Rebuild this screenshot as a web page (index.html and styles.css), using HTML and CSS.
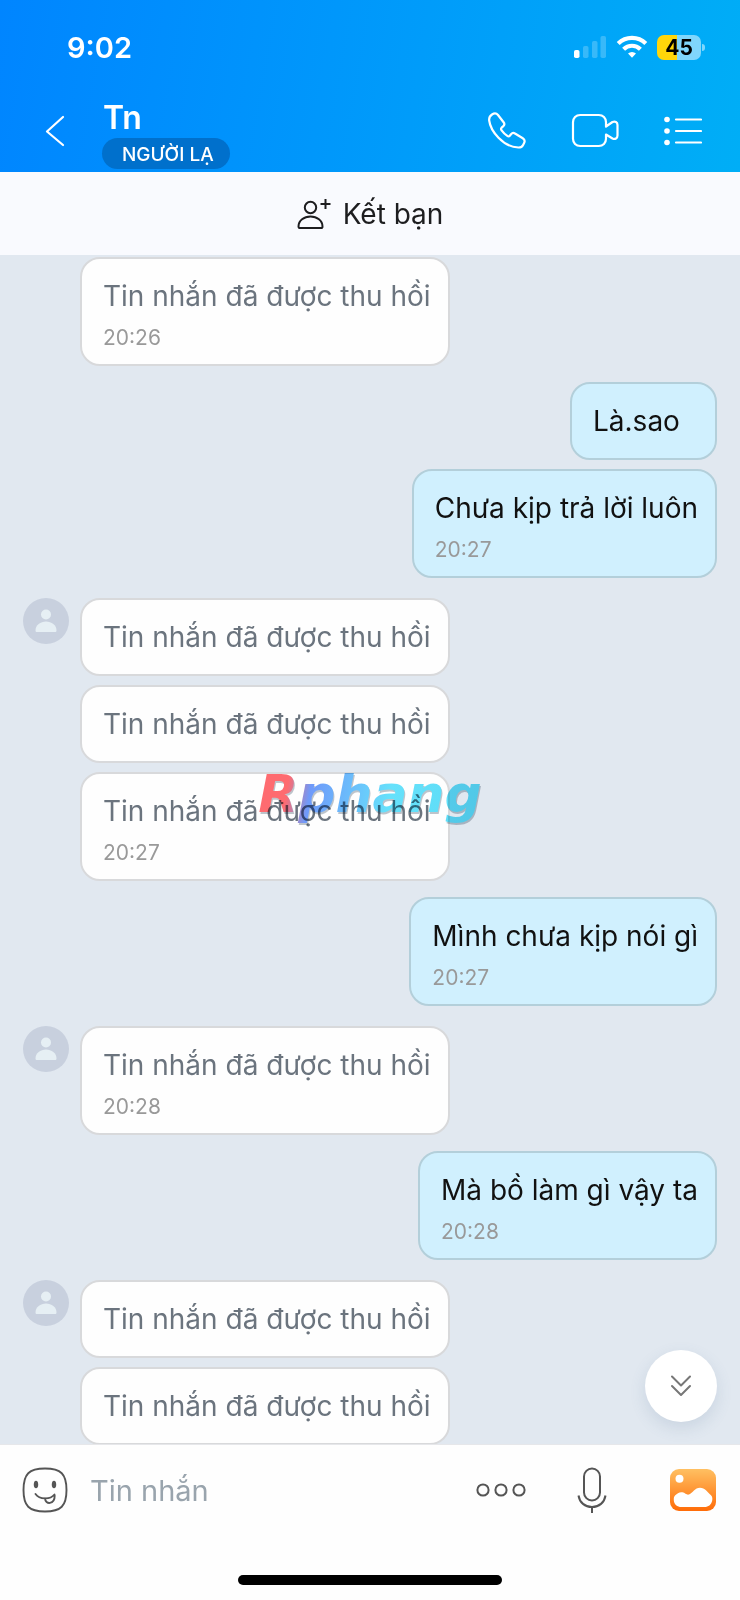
FILE: index.html
```html
<!DOCTYPE html>
<html lang="vi">
<head>
<meta charset="utf-8">
<meta name="viewport" content="width=device-width, initial-scale=1">
<title>Tn</title>
<link rel="stylesheet" href="styles.css">
</head>
<body>
<svg class="defs" aria-hidden="true">
  <symbol id="person" viewBox="0 0 46 46">
    <circle cx="23" cy="16.500" r="5"/>
    <path d="M12.500 32.500c0-5.500 5-9 10.500-9s10.500 3.500 10.500 9c0 1-.6 1.500-1.500 1.500H14c-.9 0-1.500-.5-1.500-1.500z"/>
  </symbol>
</svg>
<div class="app">
  <header class="header">
    <div class="status">
      <span class="clock">9:02</span>
      <div class="status-icons">
        <svg width="34" height="24" viewBox="0 0 34 24" fill="#fff" aria-hidden="true">
          <rect x="1" y="15" width="5.500" height="8" rx="1.800"/>
          <g opacity=".22"><rect x="10" y="11" width="5.500" height="12" rx="1.800"/><rect x="19" y="6" width="5.500" height="17" rx="1.800"/><rect x="27.500" y="1" width="5.500" height="22" rx="1.800"/></g>
        </svg>
        <svg width="32" height="24" viewBox="0 0 32 24" fill="none" stroke="#fff" stroke-width="4.200" aria-hidden="true">
          <path d="M2.200 8.500a19.800 19.800 0 0 1 27.600 0"/>
          <path d="M7.600 14.200a12 12 0 0 1 16.800 0"/>
          <path d="M16 22.800l-4-4.200a5.800 5.800 0 0 1 8 0z" fill="#fff" stroke="none"/>
        </svg>
        <div class="battery"><span class="battery-level">45</span></div>
      </div>
    </div>
    <div class="nav">
      <button class="icon-button back" aria-label="Quay lại">
        <svg width="20" height="32" viewBox="0 0 20 32" fill="none" stroke="#fff" stroke-width="2.200" stroke-linecap="round" stroke-linejoin="round"><path d="M18 2L2 16.500 18 30"/></svg>
      </button>
      <div class="contact">
        <h1 class="name">Tn</h1>
        <span class="tag">NGƯỜI LẠ</span>
      </div>
      <div class="actions">
        <button class="icon-button" aria-label="Gọi thoại">
          <svg width="38" height="38" viewBox="0 0 38 38" fill="none" stroke="#fff" stroke-width="2.200" stroke-linejoin="round"><path d="M4 2.500C6 1.200 8.500 1.200 10 3l5.600 7.200c1.200 1.600.9 3-.5 4.200l-1.500 1.300c-.8.800-.7 1.700 0 2.600 1.700 2.300 3.500 4.100 5.700 5.600.9.600 1.800.6 2.500-.2l1.200-1.500c1.200-1.400 2.500-1.700 4-.7l7.800 4.700c1.900 1.200 2.200 3 1.300 4.800l-1 1.900c-.9 1.700-2.600 2.700-4.700 2.600C15 35 2.500 19 1.200 8.500.9 6 2 3.800 4 2.500z"/></svg>
        </button>
        <button class="icon-button" aria-label="Gọi video">
          <svg width="48" height="36" viewBox="0 0 48 36" fill="none" stroke="#fff" stroke-width="2.200" stroke-linejoin="round"><path d="M35 13.500V9.200C35 5 32 2 27.800 2H9.200C5 2 2 5 2 9.200v16.600C2 30 5 33 9.200 33h18.600c4.200 0 7.200-3 7.200-7.200V21.500l6.500 4c2.600 1.200 5-.1 5-3V12c0-2.900-2.400-4.200-5-3z"/></svg>
        </button>
        <button class="icon-button" aria-label="Tùy chọn">
          <svg width="38" height="30" viewBox="0 0 38 30" fill="#fff"><circle cx="3" cy="3.500" r="2.800"/><circle cx="3" cy="15" r="2.800"/><circle cx="3" cy="26.500" r="2.800"/><path d="M12 3.500h25M12 15h25M12 26.500h25" stroke="#fff" stroke-width="2.200" stroke-linecap="round"/></svg>
        </button>
      </div>
    </div>
  </header>

  <button class="add-friend">
    <svg width="34" height="32" viewBox="0 0 34 32" fill="none" stroke="#1d1d1f" stroke-width="2" stroke-linejoin="round" aria-hidden="true"><circle cx="13.500" cy="9.500" r="5.700"/><path d="M1.500 28.500C1.500 22.500 7 18.500 13.500 18.500s12 4 12 10c0 1-.6 1.600-1.600 1.600H3.100c-1 0-1.600-.6-1.600-1.600zM28.500 1v10M23.500 6h10"/></svg>
    <span>Kết bạn</span>
  </button>

  <main class="chat">
    <div class="messages">
      <section class="group">
        <div class="stack"><div class="bubble muted">Tin nhắn đã được thu hồi<time>20:26</time></div></div>
      </section>
      <section class="group mine">
        <div class="stack">
          <div class="bubble">Là.sao</div>
          <div class="bubble">Chưa kịp trả lời luôn<time>20:27</time></div>
        </div>
      </section>
      <section class="group">
        <svg class="avatar" viewBox="0 0 46 46" aria-hidden="true"><use href="#person"/></svg>
        <div class="stack">
          <div class="bubble muted">Tin nhắn đã được thu hồi</div>
          <div class="bubble muted">Tin nhắn đã được thu hồi</div>
          <div class="bubble muted">Tin nhắn đã được thu hồi<time>20:27</time></div>
        </div>
      </section>
      <section class="group mine">
        <div class="stack"><div class="bubble">Mình chưa kịp nói gì<time>20:27</time></div></div>
      </section>
      <section class="group">
        <svg class="avatar" viewBox="0 0 46 46" aria-hidden="true"><use href="#person"/></svg>
        <div class="stack"><div class="bubble muted">Tin nhắn đã được thu hồi<time>20:28</time></div></div>
      </section>
      <section class="group mine">
        <div class="stack"><div class="bubble">Mà bồ làm gì vậy ta<time>20:28</time></div></div>
      </section>
      <section class="group">
        <svg class="avatar" viewBox="0 0 46 46" aria-hidden="true"><use href="#person"/></svg>
        <div class="stack">
          <div class="bubble muted">Tin nhắn đã được thu hồi</div>
          <div class="bubble muted">Tin nhắn đã được thu hồi</div>
        </div>
      </section>
    </div>
    <button class="to-latest" aria-label="Tin nhắn mới nhất">
      <svg width="20" height="22" viewBox="0 0 20 22" fill="none" stroke="#777" stroke-width="2" stroke-linecap="round" stroke-linejoin="round"><path d="M1 1.500l9 9 9-9M1 11l9 9 9-9"/></svg>
    </button>
  </main>

  <footer class="footer">
    <form class="composer">
      <button type="button" class="icon-button" aria-label="Nhãn dán">
        <svg width="46" height="46" viewBox="0 0 46 46" fill="none" stroke="#555" stroke-width="1.900" stroke-linecap="round"><path d="M23 1.500c16 0 21.500 5.500 21.500 21.500S39 44.500 23 44.500 1.500 39 1.500 23 7 1.500 23 1.500z"/><g fill="#555" stroke="none"><ellipse cx="14" cy="17.500" rx="2.200" ry="3.800"/><ellipse cx="32" cy="17.500" rx="2.200" ry="3.800"/></g><path d="M13.500 27c4 5.500 14.500 6 19 .5M23 31.300c.2 6.500 9.700 6.700 9.700-2.700"/></svg>
      </button>
      <input class="message-input" type="text" placeholder="Tin nhắn" aria-label="Tin nhắn">
      <button type="button" class="icon-button" aria-label="Thêm">
        <svg width="50" height="14" viewBox="0 0 50 14" fill="none" stroke="#555" stroke-width="2"><circle cx="7" cy="7" r="5.600"/><circle cx="25" cy="7" r="5.600"/><circle cx="43" cy="7" r="5.600"/></svg>
      </button>
      <button type="button" class="icon-button mic" aria-label="Ghi âm">
        <svg width="30" height="46" viewBox="0 0 30 46" fill="none" stroke="#555" stroke-width="2"><rect x="7" y="1.500" width="16" height="32" rx="8"/><path d="M1.500 28.500C2.500 35.500 8 40 15 40s12.500-4.500 13.500-11.500M15 40v6"/></svg>
      </button>
      <button type="button" class="icon-button" aria-label="Ảnh">
        <svg width="46" height="42" viewBox="0 0 46 42">
          <defs><linearGradient id="photo" x2="0" y2="1"><stop stop-color="#ffc062"/><stop offset="1" stop-color="#ff6c08"/></linearGradient></defs>
          <rect width="46" height="42" rx="9" fill="url(#photo)"/><circle cx="9.500" cy="9.800" r="4" fill="#fff"/>
          <path d="M5 26.500c2.500-2 4.300-3.800 7.400-3.200 3 .6 4.200 3 6.600 2.200 3.800-1.300 5.800-6.700 11-6.700 5 0 7.300 4.200 11 7.400 1.600 1.800 1.600 3.600 1.100 5.800-.9 3.800-3.700 6-7.600 6h-23c-4.300 0-7.500-2.800-7.700-6.800-.1-2 .1-3.600 1.200-4.700z" fill="#fff"/>
        </svg>
      </button>
    </form>
    <div class="home-bar"></div>
  </footer>
  <div class="watermark">Rphang</div>
</div>
</body>
</html>
```
FILE: styles.css
```css
* { box-sizing: border-box; }

body {
  margin: 0;
  font-family: Inter, "Liberation Sans", sans-serif;
  color: #111;
}

svg { display: block; flex: none; }
.defs { position: absolute; width: 0; height: 0; }

button { border: 0; padding: 0; background: none; font: inherit; color: inherit; }

.app {
  position: relative;
  display: flex;
  flex-direction: column;
  height: 100vh;
  background: #fefefe;
}

/* Header */
.header {
  color: #fff;
  background: linear-gradient(100deg, #0085ff, #00aef6);
}

.status {
  display: flex;
  align-items: center;
  justify-content: space-between;
  height: 94px;
  padding: 0 35px 0 67px;
}
.clock { font-size: 29px; font-weight: 600; }
.status-icons { display: flex; align-items: center; gap: 9px; }

.battery {
  position: relative;
  width: 44px;
  height: 25px;
  margin-right: 4px;
  border-radius: 7px;
  background: linear-gradient(90deg, #ffd60a 45%, #80d6fc 45%);
  color: #000;
  font-size: 21px;
  font-weight: 700;
  line-height: 25px;
  text-align: center;
}
.battery::after {
  content: "";
  position: absolute;
  left: 45px;
  top: 9px;
  width: 3px;
  height: 7px;
  border-radius: 0 3px 3px 0;
  background: #80d6fc;
}

.nav {
  display: flex;
  align-items: center;
  padding: 6px 38px 3px 45px;
}
.back, .actions { padding-bottom: 8px; }
.contact {
  flex: 1;
  display: flex;
  flex-direction: column;
  align-items: flex-start;
  gap: 2px;
  padding-left: 37px;
}
.name { margin: 0 1px; font-size: 32px; font-weight: 600; line-height: 36px; }
.tag {
  padding: 2px 16px 0 20px;
  border-radius: 16px;
  background: #0070cc;
  font-size: 19px;
  font-weight: 500;
  line-height: 29px;
}
.actions { display: flex; align-items: center; gap: 45px; }

/* Friend request bar */
.add-friend {
  display: flex;
  flex: none;
  align-items: center;
  justify-content: center;
  gap: 12px;
  height: 83px;
  background: #f9fafe;
  color: #1d1d1f;
  font-size: 28px;
}

/* Conversation */
.chat { position: relative; flex: 1; min-height: 0; background: #e1e8f0; }
.messages {
  display: flex;
  flex-direction: column;
  gap: 20px;
  height: 100%;
  padding: 2px 23px 0;
  overflow-y: auto;
  scrollbar-width: none;
}
.group { display: flex; flex: none; padding-left: 57px; }
.group.mine { justify-content: flex-end; margin-top: -4px; padding-left: 0; }
.avatar {
  width: 46px;
  height: 46px;
  margin-left: -57px;
  margin-right: 11px;
  border-radius: 50%;
  background: #c8d0de;
  fill: #e6eff4;
}
.stack { display: flex; flex-direction: column; align-items: flex-start; gap: 9px; }
.mine .stack { align-items: flex-end; }
.bubble {
  min-width: 147px;
  padding: 20px 17px 20px 21px;
  border: 2px solid #d8d9db;
  border-radius: 20px;
  background: #fefefe;
  font-size: 28px;
  line-height: 34px;
}
.muted { color: #6b747e; }
.mine .bubble { background: #d0f0fe; border-color: #b3cfda; }
.bubble time {
  display: block;
  margin: 13px 0 -6px;
  color: #999;
  font-size: 21px;
  line-height: 24px;
}

.to-latest {
  position: absolute;
  right: 23px;
  bottom: 22px;
  display: grid;
  place-items: center;
  width: 72px;
  height: 72px;
  border-radius: 50%;
  background: #fff;
  box-shadow: 0 6px 16px rgba(80, 110, 150, .16);
}

/* Composer */
.footer { flex: none; border-top: 1px solid #e6e7ea; }
.composer {
  display: flex;
  align-items: center;
  height: 90px;
  padding: 0 24px 0 22px;
}
.message-input {
  flex: 1;
  min-width: 0;
  margin: 0 16px 0 20px;
  padding: 0 2px;
  border: 0;
  outline: 0;
  background: none;
  font: inherit;
  font-size: 29px;
}
.message-input::placeholder { color: #99a4ad; opacity: 1; }
.mic { margin: 0 63px 0 51px; }
.home-bar {
  width: 264px;
  height: 10px;
  margin: 40px auto 15px;
  border-radius: 5px;
  background: #000;
}

.watermark {
  position: absolute;
  left: 50%;
  top: 50%;
  padding-bottom: 12px;
  transform: translate(-50%, -50%);
  font: italic 700 52px/60px "DejaVu Sans", sans-serif;
  color: transparent;
  background: linear-gradient(100deg, #ff6b70 14%, #6f9bfb 24%, #6bbcfc 40%, #66e2fc 58%, #5bdcf6);
  background-clip: text;
  filter: drop-shadow(1px 2px 0 rgba(70, 90, 110, .35));
  mix-blend-mode: multiply;
  pointer-events: none;
}
```
